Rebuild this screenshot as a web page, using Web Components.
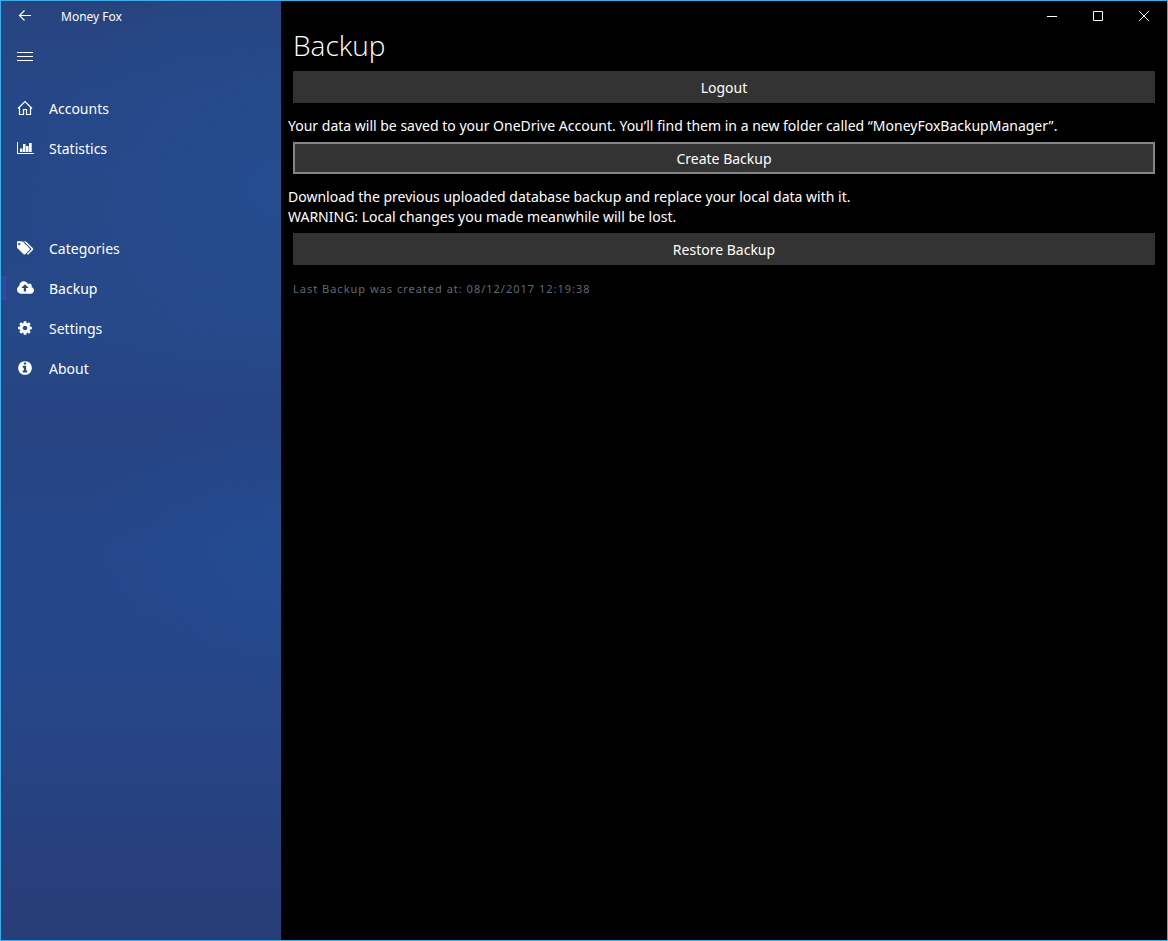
<!DOCTYPE html>
<html lang="en">
<head>
<meta charset="utf-8">
<title>Money Fox</title>
<style>
  html, body { margin: 0; height: 100%; background: #000; }
  body { font-family: "Noto Sans", "Open Sans", sans-serif; color: #fff; }
</style>
</head>
<body>
<money-app>
  <side-nav slot="nav"></side-nav>
  <caption-buttons slot="caption"></caption-buttons>
  <backup-page></backup-page>
</money-app>

<script>
const icons = {
  home: '<svg viewBox="0 0 16 16" width="16" height="16" fill="none" stroke="currentColor" stroke-width="1.2"><path d="M1 8.500 8 1.500l7 7M2.500 7.500v7h4v-5h3v5h4v-7"/></svg>',
  chart: '<svg viewBox="0 0 17 16" width="17" height="16" fill="currentColor"><path d="M0 2h1v11h16v1H0zM3 8.500h2.500V12H3zM6 4h2.500v8H6zM9 6h2.500v6H9zM12 3h2.700v9H12z"/></svg>',
  tags: '<svg viewBox="0 0 1920 1792" width="17" height="16" fill="currentColor"><path d="M384 448q0-53-37.500-90.500t-90.500-37.500-90.500 37.500-37.500 90.500 37.500 90.500 90.500 37.500 90.500-37.500 37.500-90.500zm1067 576q0 53-37 90l-491 492q-39 37-91 37-53 0-90-37l-715-716q-38-37-64.500-101t-26.500-117v-416q0-52 38-90t90-38h416q53 0 117 26.500t102 64.500l715 714q37 39 37 91zm384 0q0 53-37 90l-491 492q-39 37-91 37-36 0-59-14t-53-45l470-470q37-37 37-90 0-52-37-91l-715-714q-38-38-102-64.500t-117-26.500h224q53 0 117 26.500t102 64.500l715 714q37 39 37 91z"/></svg>',
  cloud: '<svg viewBox="0 0 1920 1792" width="17" height="16" fill="currentColor"><path d="M1280 864q0-14-9-23l-352-352q-9-9-23-9t-23 9l-351 351q-10 12-10 24 0 14 9 23t23 9h224v352q0 13 9.500 22.500t22.500 9.500h192q13 0 22.500-9.500t9.500-22.500v-352h224q13 0 22.500-9.500t9.500-22.500zm640 288q0 159-112.500 271.500t-271.500 112.500h-1088q-185 0-316.500-131.500t-131.500-316.500q0-130 70-240t188-165q-2-30-2-43 0-212 150-362t362-150q156 0 285.500 87t188.500 231q71-62 166-62 106 0 181 75t75 181q0 76-41 138 130 31 213.500 135.500t83.500 238.500z"/></svg>',
  cog: '<svg viewBox="0 0 1792 1792" width="16" height="16" fill="currentColor"><path d="M1152 896q0-106-75-181t-181-75-181 75-75 181 75 181 181 75 181-75 75-181zm512-109v222q0 12-8 23t-20 13l-185 28q-19 54-39 91 35 50 107 138 10 12 10 25t-9 23q-27 37-99 108t-94 71q-12 0-26-9l-138-108q-44 23-91 38-16 136-29 186-7 28-36 28h-222q-14 0-24.500-8.500t-11.500-21.500l-28-184q-49-16-90-37l-141 107q-10 9-25 9-14 0-25-11-126-114-165-168-7-10-7-23 0-12 8-23 15-21 51-66.500t54-70.500q-27-50-41-99l-183-27q-13-2-21-12.500t-8-23.500v-222q0-12 8-23t19-13l186-28q14-46 39-92-40-57-107-138-10-12-10-24 0-10 9-23 26-36 98.500-107.500t94.500-71.500q13 0 26 10l138 107q44-23 91-38 16-136 29-186 7-28 36-28h222q14 0 24.500 8.500t11.500 21.500l28 184q49 16 90 37l142-107q9-9 24-9 13 0 25 10 129 119 165 170 7 8 7 22 0 12-8 23-15 21-51 66.500t-54 70.500q26 50 41 98l183 28q13 2 21 12.500t8 23.500z"/></svg>',
  info: '<svg viewBox="0 0 1792 1792" width="16" height="16" fill="currentColor"><path d="M1152 1376v-160q0-14-9-23t-23-9h-96v-512q0-14-9-23t-23-9h-320q-14 0-23 9t-9 23v160q0 14 9 23t23 9h96v320h-96q-14 0-23 9t-9 23v160q0 14 9 23t23 9h448q14 0 23-9t9-23zm-128-896v-160q0-14-9-23t-23-9h-192q-14 0-23 9t-9 23v160q0 14 9 23t23 9h192q14 0 23-9t9-23zm640 416q0 209-103 385.500t-279.500 279.500-385.500 103-385.500-103-279.500-279.500-103-385.500 103-385.500 279.500-279.500 385.500-103 385.500 103 279.500 279.500 103 385.500z"/></svg>'
};

class ShadowElement extends HTMLElement {
  render(html) {
    this.attachShadow({ mode: 'open' }).innerHTML = html;
  }
}

/* Window frame: navigation pane on the left, caption bar and page on the right */
customElements.define('money-app', class extends ShadowElement {
  constructor() {
    super();
    this.render(`
      <style>
        :host { display: grid; grid-template-columns: 280px minmax(0, 1fr); box-sizing: border-box;
                min-height: 100vh; border: 1px solid #3daee9; background: #000; }
        .content { display: flex; flex-direction: column; }
      </style>
      <slot name="nav"></slot>
      <div class="content"><slot name="caption"></slot><slot></slot></div>`);
  }
});

customElements.define('nav-item', class extends ShadowElement {
  constructor() {
    super();
    this.render(`
      <style>
        :host { display: block; }
        a { display: flex; align-items: center; height: 40px; font-size: 14px; line-height: 20px;
            color: #fff; text-decoration: none; }
        .mark { width: 6px; height: 24px; }
        :host([selected]) .mark { background: #33479b; }
        .icon { width: 42px; height: 16px; padding-left: 10px; box-sizing: border-box; }
        .label { padding-top: 2px; }
        svg { display: block; }
      </style>
      <a href="#"><span class="mark"></span><span class="icon">${icons[this.getAttribute('icon')]}</span><span class="label"><slot></slot></span></a>`);
    if (this.hasAttribute('selected')) this.shadowRoot.querySelector('a').setAttribute('aria-current', 'page');
  }
});

customElements.define('side-nav', class extends ShadowElement {
  constructor() {
    super();
    this.render(`
      <style>
        :host { display: flex; flex-direction: column;
          background:
            radial-gradient(ellipse 200px 150px at 100% 58%, #234d94aa 0%, #234d9455 50%, #234d9400 100%),
            radial-gradient(ellipse 260px 220px at 100% 20%, #244f93aa 0%, #244f9355 50%, #244f9300 100%),
            linear-gradient(#27447f 0%, #264787 10%, #264888 35%, #264382 46%, #25478a 58%, #264688 75%, #273f7c 92%, #283e78 100%); }
        header { display: flex; align-items: flex-start; height: 31px; }
        button { display: flex; align-items: center; justify-content: center; width: 48px; padding: 0;
                 border: 0; background: none; color: inherit; }
        .back { height: 29px; }
        .menu { height: 48px; }
        .title { padding-left: 12px; font-size: 12px; line-height: 31px; }
        nav { padding-top: 8px; }
        .lower { padding-top: 60px; }
      </style>
      <header>
        <button class="back" aria-label="Back"><svg width="14" height="13" viewBox="0 0 14 13" fill="none" stroke="currentColor" stroke-width="1.2"><path d="M1.500 6.500H13M6.500 1.500l-5 5 5 5"/></svg></button>
        <span class="title">Money Fox</span>
      </header>
      <button class="menu" aria-label="Menu"><svg width="16" height="9" viewBox="0 0 16 9" fill="currentColor"><path d="M0 0h16v1H0zM0 4h16v1H0zM0 8h16v1H0z"/></svg></button>
      <nav>
        <nav-item icon="home">Accounts</nav-item>
        <nav-item icon="chart">Statistics</nav-item>
        <div class="lower">
          <nav-item icon="tags">Categories</nav-item>
          <nav-item icon="cloud" selected>Backup</nav-item>
          <nav-item icon="cog">Settings</nav-item>
          <nav-item icon="info">About</nav-item>
        </div>
      </nav>`);
  }
});

customElements.define('caption-buttons', class extends ShadowElement {
  constructor() {
    super();
    this.render(`
      <style>
        :host { display: flex; justify-content: flex-end; height: 30px; }
        button { display: flex; align-items: center; justify-content: center; width: 46px; height: 30px;
                 padding: 0; border: 0; background: none; color: inherit; }
      </style>
      <button aria-label="Minimize"><svg width="10" height="10" viewBox="0 0 10 10" fill="none" stroke="currentColor"><path d="M0 5.500h10"/></svg></button>
      <button aria-label="Maximize"><svg width="10" height="10" viewBox="0 0 10 10" fill="none" stroke="currentColor"><path d="M.5.500h9v9h-9z"/></svg></button>
      <button aria-label="Close"><svg width="10" height="10" viewBox="0 0 10 10" fill="none" stroke="currentColor"><path d="M0 0l10 10M10 0L0 10"/></svg></button>`);
  }
});

customElements.define('wide-button', class extends ShadowElement {
  constructor() {
    super();
    this.render(`
      <style>
        :host { display: block; padding: 0 5px; }
        button { display: block; width: 100%; height: 32px; padding: 2px 0 0; border: 2px solid #333; background: #333;
                 color: #fff; font-family: inherit; font-size: 14px; line-height: 20px; }
        :host([outlined]) button { border-color: #858585; }
      </style>
      <button><slot></slot></button>`);
  }
});

customElements.define('backup-page', class extends ShadowElement {
  constructor() {
    super();
    this.render(`
      <style>
        :host { display: block; padding: 0 7px; }
        h1 { margin: 0; padding: 0 5px; height: 40px; font-family: "Open Sans", sans-serif;
             font-size: 28px; line-height: 28px; font-weight: 300; }
        p { margin: 0; font-size: 14px; line-height: 20px; }
        .text { padding: 13px 0 6px; }
        .stamp { padding: 14px 5px; font-size: 11px; letter-spacing: 1px; color: #5f6a76; }
      </style>
      <h1>Backup</h1>
      <wide-button>Logout</wide-button>
      <p class="text">Your data will be saved to your OneDrive Account. You’ll find them in a new folder called “MoneyFoxBackupManager”.</p>
      <wide-button outlined>Create Backup</wide-button>
      <p class="text">Download the previous uploaded database backup and replace your local data with it.<br>WARNING: Local changes you made meanwhile will be lost.</p>
      <wide-button>Restore Backup</wide-button>
      <p class="stamp">Last Backup was created at: 08/12/2017 12:19:38</p>`);
  }
});
</script>
</body>
</html>
